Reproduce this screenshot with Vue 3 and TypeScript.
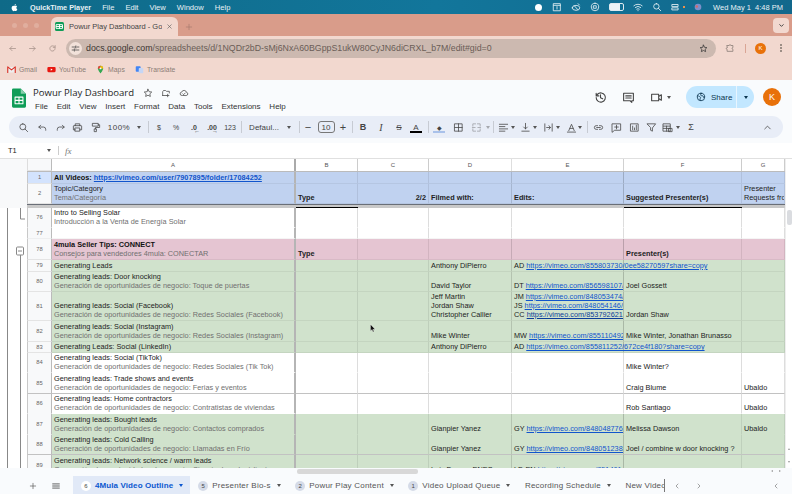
<script setup lang="ts">
interface Tool { x: number; kind: 'icon' | 'text' | 'sep' | 'caret' | 'box'; v?: string; cls?: string }
interface Edit { who: string; url: string; dark?: boolean }
interface Row {
  n: string; h: number; tone: string; en?: string; es?: string; bold?: boolean
  b?: string; c?: string; d?: string[]; e?: Edit[]; f?: string; g?: string[]; link?: string
  headTail?: boolean; sel?: boolean; strong?: boolean; open?: boolean
}

const icons: Record<string, string> = {
  search: 'M10.5 4a6.5 6.5 0 1 0 0 13 6.5 6.5 0 0 0 0-13zM15.5 15.5 21 21',
  undo: 'M8 7 4 11l4 4M4 11h10a5 5 0 0 1 5 5v2',
  redo: 'M16 7l4 4-4 4M20 11H10a5 5 0 0 0-5 5v2',
  print: 'M7 8V4h10v4M7 17H3V9a1 1 0 0 1 1-1h16a1 1 0 0 1 1 1v8h-4M7 13h10v7H7z',
  paint: 'M6 3h12v6H6zM18 6h3v6h-9v3M10 15h4v6h-4z',
  border: 'M4 4h16v16H4zM12 4v16M4 12h16',
  merge: 'M4 9V4h6M14 4h6v5M4 15v5h6M14 20h6v-5M3 12h6M15 12h6',
  align: 'M3 5h18M3 10h12M3 15h18M3 20h12',
  valign: 'M12 3v12M8 11l4 4 4-4M4 20h16',
  wrap: 'M4 4v16M20 4v16M8 12h8M13 8l3 4-3 4',
  rotate: 'M6 19 12 5l6 14M8.5 14h7M3 22h18',
  link: 'M10 8H7a4 4 0 0 0 0 8h3M14 8h3a4 4 0 0 1 0 8h-3M8 12h8',
  note: 'M3 4h18v14H8l-5 4zM12 7v8M8 11h8',
  chart: 'M4 4h16v16H4zM8 9v8M12 13v4M16 7v10',
  filter: 'M3 4h18l-7 9v7l-4-2v-5z',
  view: 'M3 4h15v16H3zM3 9h15M3 14h15M10 9v11M15 14h7v7h-7z',
  up: 'M6 15l6-6 6 6',
  star: 'M12 3l2.8 5.9 6.2.8-4.6 4.3 1.2 6.3L12 17.3l-5.6 3 1.2-6.3L3 9.7l6.2-.8z',
  moved: 'M4 18V9l2-3h5l2 2h7v4M4 18h8M16 15v6M13 18h6',
  cloud: 'M7 18a4 4 0 0 1-.6-8A6 6 0 0 1 18 10.500a3.800 3.800 0 0 1 0 7.500zM9 14l2 2 4-4',
  history: 'M4 12a8.500 8.500 0 1 0 2.500-6L4 8.500M4 4v5h5M12 7v5.500l4 2',
  comment: 'M3 4h18v14h-3v3l-3-3H3zM7 9h10M7 13h10',
  video: 'M3 6h13v12H3zM16 10l5-3v10l-5-3',
  globe: 'M12 3a9 9 0 1 0 0 18 9 9 0 0 0 0-18zM4 9c3 0 4 2 6 3s1 3 0 4 0 4 0 4M14 3c-1 2-3 2-3 4s3 2 5 2 1 3 2 4l2-1',
  puzzle: 'M5 6h5a2 2 0 1 1 4 0h5v5a2 2 0 1 0 0 4v5H5v-5a2 2 0 1 1 0-4z',
  reload: 'M19 12a7 7 0 1 1-2-5l2 2M19 4v5h-5',
  back: 'M20 12H5M11 6l-6 6 6 6',
  forward: 'M4 12h15M13 6l6 6-6 6',
  tune: 'M3 8h10M17 8h4M13 5v6M3 16h4M11 16h10M9 13v6',
  menu: 'M4 7h16M4 12h16M4 17h16',
  left: 'M15 6l-6 6 6 6',
  right: 'M9 6l6 6-6 6',
  down: 'M6 9l6 6 6-6',
  close: 'M6 6l12 12M18 6 6 18',
  plus: 'M12 4v16M4 12h16',
}

const rawTools: Tool[] = [
  { x: 23, kind: 'icon', v: 'search' }, { x: 42, kind: 'icon', v: 'undo' }, { x: 60, kind: 'icon', v: 'redo' },
  { x: 77, kind: 'icon', v: 'print' }, { x: 95, kind: 'icon', v: 'paint' }, { x: 119, kind: 'text', v: '100%', cls: 'wide' },
  { x: 139, kind: 'caret' }, { x: 148, kind: 'sep' }, { x: 159, kind: 'text', v: '$', cls: 'small' },
  { x: 176, kind: 'text', v: '%', cls: 'small' }, { x: 194, kind: 'text', v: '.0', cls: 'dec less' },
  { x: 212, kind: 'text', v: '.00', cls: 'dec more' }, { x: 230, kind: 'text', v: '123', cls: 'small' },
  { x: 241, kind: 'sep' }, { x: 264, kind: 'text', v: 'Defaul...' }, { x: 289, kind: 'caret' }, { x: 299, kind: 'sep' },
  { x: 308, kind: 'text', v: '−', cls: 'big' }, { x: 326, kind: 'box', v: '10' }, { x: 343, kind: 'text', v: '+', cls: 'big' },
  { x: 352, kind: 'sep' }, { x: 363, kind: 'text', v: 'B', cls: 'bold' }, { x: 381, kind: 'text', v: 'I', cls: 'ital' },
  { x: 399, kind: 'text', v: 'S', cls: 'strike' }, { x: 416, kind: 'text', v: 'A', cls: 'color' }, { x: 428, kind: 'sep' },
  { x: 439, kind: 'text', v: '◆', cls: 'fill' }, { x: 458, kind: 'icon', v: 'border' }, { x: 476, kind: 'icon', v: 'merge', cls: 'dim' },
  { x: 488, kind: 'caret', cls: 'dim' }, { x: 493, kind: 'sep' }, { x: 503, kind: 'icon', v: 'align' }, { x: 513, kind: 'caret' },
  { x: 525, kind: 'icon', v: 'valign' }, { x: 535, kind: 'caret' }, { x: 548, kind: 'icon', v: 'wrap' }, { x: 558, kind: 'caret' },
  { x: 571, kind: 'icon', v: 'rotate' }, { x: 580, kind: 'caret' }, { x: 587, kind: 'sep' }, { x: 598, kind: 'icon', v: 'link' },
  { x: 616, kind: 'icon', v: 'note' }, { x: 634, kind: 'icon', v: 'chart' }, { x: 651, kind: 'icon', v: 'filter' },
  { x: 667, kind: 'icon', v: 'view' }, { x: 678, kind: 'caret' }, { x: 691, kind: 'text', v: 'Σ', cls: 'sigma' },
  { x: 767, kind: 'icon', v: 'up' },
]
let edge = 9
const tools = rawTools.map((t, i) => {
  const next = i === rawTools.length - 1 ? 783 : rawTools[i + 1].x
  const half = Math.min(t.x - edge, (next - t.x) / 2)
  const gap = t.x - half - edge
  edge = t.x + half
  return { ...t, w: half * 2, gap }
})

const appMenu = ['File', 'Edit', 'View', 'Window', 'Help']
const docMenu = ['File', 'Edit', 'View', 'Insert', 'Format', 'Data', 'Tools', 'Extensions', 'Help']
const columns = ['A', 'B', 'C', 'D', 'E', 'F', 'G']

const frozen: Row[] = [
  { n: '1', h: 12, tone: 'blue', en: 'All Videos: ', link: 'https://vimeo.com/user/7907895/folder/17084252', sel: true, bold: true },
  { n: '2', h: 20, tone: 'blue', en: 'Topic/Category', es: 'Tema/Categoría', b: 'Type', c: '2/2', d: ['Filmed with:'], e: [{ who: 'Edits:', url: '' }], f: 'Suggested Presenter(s)', g: ['Presenter', 'Requests fro'] },
]
const gl = 'Generating leads: '
const ge = 'Generación de oportunidades de negocio: '
const rows: Row[] = [
  { n: '76', h: 20, tone: 'white', en: 'Intro to Selling Solar', es: 'Introducción a la Venta de Energía Solar', open: true },
  { n: '77', h: 11, tone: 'white' },
  { n: '78', h: 21, tone: 'pink', en: '4mula Seller Tips: CONNECT', es: 'Consejos para vendedores 4mula: CONECTAR', b: 'Type', f: 'Presenter(s)', bold: true, headTail: true },
  { n: '79', h: 12, tone: 'green', en: 'Generating Leads', d: ['Anthony DiPierro'], e: [{ who: 'AD', url: 'https://vimeo.com/855803730/0ee58270597share=copy' }] },
  { n: '80', h: 20, tone: 'green', en: gl + 'Door knocking', es: ge + 'Toque de puertas', d: ['David Taylor'], e: [{ who: 'DT', url: 'https://vimeo.com/856598107/' }], f: 'Joel Gossett' },
  { n: '81', h: 29, tone: 'green', en: gl + 'Social (Facebook)', es: ge + 'Redes Sociales (Facebook)', d: ['Jeff Martin', 'Jordan Shaw', 'Christopher Callier'], e: [{ who: 'JM', url: 'https://vimeo.com/848053474/' }, { who: 'JS', url: 'https://vimeo.com/848054146/' }, { who: 'CC', url: 'https://vimeo.com/853792621/', dark: true }], f: 'Jordan Shaw' },
  { n: '82', h: 21, tone: 'green', en: gl + 'Social (Instagram)', es: ge + 'Redes Sociales (Instagram)', d: ['Mike Winter'], e: [{ who: 'MW', url: 'https://vimeo.com/855110492' }], f: 'Mike Winter, Jonathan Brunasso' },
  { n: '83', h: 11, tone: 'green', en: 'Generating Leads: Social (LinkedIn)', d: ['Anthony DiPierro'], e: [{ who: 'AD', url: 'https://vimeo.com/855811252/672ce4f180?share=copy' }] },
  { n: '84', h: 20, tone: 'white', en: gl + 'Social (TikTok)', es: ge + 'Redes Sociales (Tik Tok)', f: 'Mike Winter?', open: true },
  { n: '85', h: 21, tone: 'white', en: gl + 'Trade shows and events', es: ge + 'Ferias y eventos', f: 'Craig Blume', g: ['Ubaldo'], strong: true },
  { n: '86', h: 20, tone: 'white', en: gl + 'Home contractors', es: ge + 'Contratistas de viviendas', f: 'Rob Santiago', g: ['Ubaldo'], open: true },
  { n: '87', h: 21, tone: 'green', en: gl + 'Bought leads', es: ge + 'Contactos comprados', d: ['Gianpier Yanez'], e: [{ who: 'GY', url: 'https://vimeo.com/848048776/' }], f: 'Melissa Dawson', g: ['Ubaldo'], open: true },
  { n: '88', h: 20, tone: 'green', en: gl + 'Cold Calling', es: ge + 'Llamadas en Frío', d: ['Gianpier Yanez'], e: [{ who: 'GY', url: 'https://vimeo.com/848051238/' }], f: 'Joel / combine w door knocking ?', strong: true },
  { n: '89', h: 21, tone: 'green', en: gl + 'Network science / warm leads', es: ge + 'Ciencia de redes/clientes', d: ['Luis Dome - ENES'], e: [{ who: 'LD EN', url: 'https://vimeo.com/851401' }] },
]

const tabs = [
  { n: '6', name: '4Mula Video Outline', active: true },
  { n: '5', name: 'Presenter Bio-s' },
  { n: '2', name: 'Powur Play Content' },
  { n: '1', name: 'Video Upload Queue' },
  { n: '', name: 'Recording Schedule' },
]
</script>

<template>
  <div class="page">
    <header class="mac">
      <svg class="apple" viewBox="0 0 24 24"><path d="M17 12.600c0-2.300 1.900-3.400 2-3.500-1.100-1.600-2.800-1.800-3.400-1.800-1.400-.2-2.800.9-3.500.9s-1.900-.8-3.100-.8c-1.600 0-3.100.9-3.900 2.400-1.700 2.900-.4 7.200 1.200 9.500.8 1.100 1.700 2.400 3 2.400 1.200-.1 1.700-.8 3.100-.8s1.900.8 3.100.7c1.300 0 2.100-1.100 2.900-2.300.9-1.300 1.300-2.600 1.300-2.700-.1 0-2.700-1-2.700-4zM14.700 5.700c.6-.8 1.100-1.900 1-3-1 0-2.100.6-2.800 1.400-.6.700-1.100 1.800-1 2.900 1.100.1 2.200-.5 2.800-1.300z" /></svg>
      <b class="mac-app">QuickTime Player</b>
      <span v-for="m in appMenu" :key="m" class="mac-item">{{ m }}</span>
      <div class="mac-right">
        <span class="rec"></span>
        <svg class="st" viewBox="0 0 24 24"><path d="M4 4h16v17H4zM4 8h16M12 11v6" /></svg>
        <svg class="st" viewBox="0 0 24 24"><path d="M3 14a9 6 0 0 1 18 0 9 6 0 0 1-18 0zM8 9l8 9M17 4l3 3" /></svg>
        <svg class="st" viewBox="0 0 24 24"><path d="M12 3a9 9 0 1 0 0 18 9 9 0 0 0 0-18zM9 9h6v6H9z" /></svg>
        <span class="battery"><i></i></span>
        <svg class="st wifi" viewBox="0 0 24 24"><path d="M2 9a15 15 0 0 1 20 0M5.500 13a10 10 0 0 1 13 0M9 17a5 5 0 0 1 6 0M12 20.500v.5" /></svg>
        <svg class="st" viewBox="0 0 24 24"><path :d="icons.search" /></svg>
        <svg class="st" viewBox="0 0 24 24"><path d="M3 6h14v5H3zM3 14h14v5H3z" /></svg>
        <span class="orange-dot"></span>
        <svg class="st siri" viewBox="0 0 24 24"><circle cx="12" cy="12" r="8" fill="#7c8fc9" stroke="none" /><circle cx="9" cy="11" r="3" fill="#d46a6a" stroke="none" /></svg>
        <span class="clock">Wed May 1&nbsp;&nbsp;4:48 PM</span>
      </div>
    </header>

    <section class="tabstrip">
      <div class="lights"><i></i><i></i><i></i></div>
      <div class="ctab">
        <span class="fav"><svg viewBox="0 0 24 24"><path d="M4 7h16v10H4zM4 12h16M12 7v10" /></svg></span>
        <span class="ctab-title">Powur Play Dashboard - Goog</span>
        <svg class="x" viewBox="0 0 24 24"><path :d="icons.close" /></svg>
      </div>
      <svg class="newtab" viewBox="0 0 24 24"><path :d="icons.plus" /></svg>
      <span class="tabchev"><svg viewBox="0 0 24 24"><path :d="icons.down" /></svg></span>
    </section>

    <section class="addr">
      <svg class="nav" viewBox="0 0 24 24"><path :d="icons.back" /></svg>
      <svg class="nav" viewBox="0 0 24 24"><path :d="icons.forward" /></svg>
      <svg class="nav" viewBox="0 0 24 24"><path :d="icons.reload" /></svg>
      <div class="omni">
        <span class="tune"><svg viewBox="0 0 24 24"><path :d="icons.tune" /></svg></span>
        <span class="url"><span class="host">docs.google.com</span>/spreadsheets/d/1NQDr2bD-sMj6NxA60BGppS1ukW80CyJN6diCRXL_b7M/edit#gid=0</span>
        <svg class="ostar" viewBox="0 0 24 24"><path :d="icons.star" /></svg>
      </div>
      <svg class="ext" viewBox="0 0 24 24"><path :d="icons.puzzle" /></svg>
      <span class="vsep"></span>
      <span class="mini-k">K</span>
      <span class="dots"><i></i><i></i><i></i></span>
    </section>

    <section class="bookmarks">
      <span class="bm"><svg viewBox="0 0 24 24"><path d="M2 5h20v15H2z" fill="#eee" /><path d="M2 20V5l10 8 10-8v15" fill="none" stroke="#d93025" stroke-width="3" /></svg>Gmail</span>
      <span class="bm yt"><svg viewBox="0 0 24 24"><rect x="1" y="5" width="22" height="14" rx="3" fill="#e8170f" /><path d="M10 9l5 3-5 3z" fill="#fff" /></svg>YouTube</span>
      <span class="bm mp"><svg viewBox="0 0 24 24"><path d="M12 2a7 7 0 0 0-7 7c0 5 7 13 7 13s7-8 7-13a7 7 0 0 0-7-7z" fill="#34a853" /><path d="M12 2a7 7 0 0 0-7 7l7 1z" fill="#ea4335" /><path d="M12 2a7 7 0 0 1 7 7l-7 1z" fill="#fbbc04" /><circle cx="12" cy="9" r="2.500" fill="#fff" /></svg>Maps</span>
      <span class="bm tr"><svg viewBox="0 0 24 24"><rect x="2" y="3" width="13" height="15" rx="2" fill="#4285f4" /><rect x="10" y="8" width="12" height="14" rx="2" fill="#c5d6f5" /></svg>Translate</span>
    </section>

    <section class="dochead">
      <svg class="logo" viewBox="0 0 16 22"><path d="M1.500 0H10l6 6v14.500a1.500 1.500 0 0 1-1.500 1.500h-13A1.500 1.500 0 0 1 0 20.500v-19A1.500 1.500 0 0 1 1.500 0z" fill="#0f9d58" /><path d="M10 0v6h6z" fill="#87ceac" /><path d="M3.500 10h9v7.500h-9zM3.500 13.700h9M8 10v7.500" fill="none" stroke="#fff" stroke-width="1.200" /></svg>
      <div class="docmeta">
        <div class="titlerow">
          <span class="doctitle">Powur Play Dashboard</span>
          <svg class="hicon" viewBox="0 0 24 24"><path :d="icons.star" /></svg>
          <svg class="hicon" viewBox="0 0 24 24"><path :d="icons.moved" /></svg>
          <svg class="hicon" viewBox="0 0 24 24"><path :d="icons.cloud" /></svg>
        </div>
        <nav class="docmenu"><span v-for="m in docMenu" :key="m">{{ m }}</span></nav>
      </div>
      <div class="headright">
        <svg class="big-ico" viewBox="0 0 24 24"><path :d="icons.history" /></svg>
        <svg class="big-ico" viewBox="0 0 24 24"><path :d="icons.comment" /></svg>
        <svg class="big-ico vid" viewBox="0 0 24 24"><path :d="icons.video" /></svg>
        <span class="tcaret vcaret"></span>
        <div class="share">
          <span class="share-main"><svg viewBox="0 0 24 24"><path :d="icons.globe" /></svg>Share</span>
          <span class="share-more"><span class="tcaret"></span></span>
        </div>
        <span class="avatar">K</span>
      </div>
    </section>

    <section class="toolbar-wrap">
      <div class="toolbar">
        <span v-for="(t, i) in tools" :key="i" class="tool" :class="[t.kind, t.cls]" :style="{ width: t.w + 'px', marginLeft: t.gap + 'px' }">
          <svg v-if="t.kind === 'icon'" viewBox="0 0 24 24"><path :d="icons[t.v as string]" /></svg>
          <i v-else-if="t.kind === 'sep'" class="tsep"></i>
          <i v-else-if="t.kind === 'caret'" class="tcaret"></i>
          <b v-else-if="t.kind === 'box'" class="sizebox">{{ t.v }}</b>
          <template v-else>{{ t.v }}</template>
        </span>
      </div>
    </section>

    <section class="formula">
      <span class="nameref">T1</span>
      <i class="tcaret"></i>
      <i class="fsep"></i>
      <i class="fx">fx</i>
    </section>

    <section class="grid-area">
      <div class="gutter">
        <div class="gut-top"></div>
        <svg class="gut-svg" viewBox="0 0 27 262">
          <path d="M7.500 0V262M20.500 0V11H25M20.500 47V262" />
          <rect x="16.500" y="39" width="7" height="8" rx="1" fill="#fff" />
          <path d="M18 43h4" />
        </svg>
      </div>
      <div class="sheet">
        <div class="row colhead">
          <span class="cell num corner"></span>
          <span v-for="c in columns" :key="c" class="cell letter" :class="'c' + c">{{ c }}</span>
        </div>
        <div v-for="r in frozen" :key="r.n" class="row" :class="r.tone" :style="{ height: r.h + 'px' }">
          <span class="cell num" :class="{ sel: r.sel }">{{ r.n }}</span>
          <span class="cell cA">
            <span class="lines">
              <span v-if="r.link" class="en strong">{{ r.en }}<u class="lnk">{{ r.link }}</u></span>
              <template v-else>
                <span class="en mid">{{ r.en }}</span>
                <span class="es">{{ r.es }}</span>
              </template>
            </span>
          </span>
          <span class="cell cB"><b>{{ r.b }}</b></span>
          <span class="cell cC end"><b>{{ r.c }}</b></span>
          <span class="cell cD"><b v-for="d in r.d" :key="d">{{ d }}</b></span>
          <span class="cell cE"><b v-for="e in r.e" :key="e.who">{{ e.who }}</b></span>
          <span class="cell cF"><b>{{ r.f }}</b></span>
          <span class="cell cG clip"><span v-for="g in r.g" :key="g" class="gl">{{ g }}</span></span>
        </div>
        <div class="freeze"><i class="fb"></i><i class="ff"></i></div>
        <div class="scrolled">
          <div v-for="r in rows" :key="r.n" class="row" :class="[r.tone, { strongb: r.strong, openb: r.open }]" :style="{ height: r.h + 'px' }">
            <span class="cell num">{{ r.n }}</span>
            <span class="cell cA">
              <span class="lines">
                <span class="en" :class="{ strong: r.bold }">{{ r.en }}</span>
                <span v-if="r.es" class="es">{{ r.es }}</span>
              </span>
            </span>
            <span class="cell cB"><b>{{ r.b }}</b></span>
            <span class="cell cC"></span>
            <span class="cell cD"><span v-for="d in r.d" :key="d" class="gl">{{ d }}</span></span>
            <span class="cell cE" :class="{ clip: r.f || r.n === '81' || r.n === '89' }">
              <span v-for="e in r.e" :key="e.who" class="gl">{{ e.who }} <u class="lnk" :class="{ dark: e.dark }">{{ e.url }}</u></span>
            </span>
            <span class="cell cF"><b v-if="r.headTail">{{ r.f }}</b><span v-else>{{ r.f }}</span></span>
            <span class="cell cG"><span v-for="g in r.g" :key="g" class="gl">{{ g }}</span></span>
          </div>
          <svg class="cursor" viewBox="0 0 12 16"><path d="M1 0v13l3-3 2 5 2-1-2-4.500h4z" fill="#111" stroke="#fff" stroke-width=".6" /></svg>
        </div>
      </div>
      <div class="vscroll"><i class="vthumb"></i><i class="vup"></i><i class="vdn"></i></div>
    </section>

    <footer class="bottom">
      <div class="hscroll"><i class="hthumb"></i><i class="harr"></i><i class="harr r"></i></div>
      <div class="tabbar">
        <svg class="fplus" viewBox="0 0 24 24"><path :d="icons.plus" /></svg>
        <svg class="fmenu" viewBox="0 0 24 24"><path :d="icons.menu" /></svg>
        <div class="stabs">
          <div v-for="t in tabs" :key="t.name" class="stab" :class="{ on: t.active }">
            <span v-if="t.n" class="badge">{{ t.n }}</span>
            <span class="sname">{{ t.name }}</span>
            <i class="tcaret"></i>
          </div>
          <div class="stab last"><span class="sname">New Video</span></div>
        </div>
        <svg class="arrow a1" viewBox="0 0 24 24"><path :d="icons.left" /></svg>
        <svg class="arrow a2" viewBox="0 0 24 24"><path :d="icons.right" /></svg>
        <svg class="arrow a3" viewBox="0 0 24 24"><path :d="icons.left" /></svg>
      </div>
    </footer>
  </div>
</template>

<style>
html, body { margin: 0; overflow: hidden; }
</style>

<style scoped>
.page { width: 792px; height: 494px; overflow: hidden; display: flex; flex-direction: column; font-family: "Liberation Sans", Arial, sans-serif; color: #222; background: #fff; }
svg { fill: none; stroke: currentColor; stroke-width: 2; stroke-linecap: round; stroke-linejoin: round; flex: none; }
i { font-style: normal; }

.mac { height: 14px; flex: none; display: flex; align-items: center; background: linear-gradient(90deg, #0f6a88, #12769b 55%, #12688c); color: #e8f1f5; font-size: 7.600px; padding-left: 10px; box-sizing: border-box; }
.apple { width: 9px; height: 9px; fill: #fff; stroke: none; margin-right: 11px; }
.mac-app { margin-right: 11px; font-weight: 700; font-size: 7.300px; white-space: nowrap; }
.mac-item { margin-right: 11px; }
.mac-right { margin-left: auto; display: flex; align-items: center; gap: 9px; padding-right: 9px; font-size: 7.500px; }
.rec { width: 7px; height: 7px; border-radius: 50%; background: #fff; margin-right: 1px; }
.st { width: 10px; height: 10px; stroke: #eaf3f7; }
.battery { width: 13px; height: 6px; border: 1px solid #dfeaf0; border-radius: 2px; }
.battery i { display: block; width: 10px; height: 6px; background: #eaf3f7; }
.orange-dot { width: 2px; height: 2px; background: #e8914a; margin-left: -7px; }
.siri { margin-left: -1px; }
.clock { white-space: nowrap; margin-left: 1px; }

.tabstrip { height: 22px; flex: none; background: #d99c8a; display: flex; align-items: flex-end; position: relative; }
.lights { display: flex; gap: 6px; padding: 0 0 8px 12px; width: 51px; box-sizing: border-box; flex: none; }
.lights i { width: 5px; height: 5px; border-radius: 50%; background: #e0ae9e; flex: none; }
.ctab { width: 127px; height: 19px; background: #f2d8cf; border-radius: 6px 6px 0 0; display: flex; align-items: center; padding: 0 5px 0 4px; box-sizing: border-box; font-size: 7.500px; color: #444; flex: none; }
.fav { width: 9px; height: 9px; background: #0f9d58; border-radius: 1.500px; display: flex; flex: none; margin-right: 5px; }
.fav svg { width: 9px; height: 9px; stroke: #fff; stroke-width: 2.500; }
.ctab-title { flex: 1; overflow: hidden; white-space: nowrap; }
.x { width: 7px; height: 7px; margin-left: 4px; stroke: #555; }
.newtab { width: 8px; height: 8px; margin: 0 0 5px 7px; stroke: #a67a6c; }
.tabchev { position: absolute; right: 3px; top: 4px; width: 16px; height: 15px; background: #f2d8cf; border-radius: 4px; display: flex; align-items: center; justify-content: center; }
.tabchev svg { width: 7px; height: 7px; stroke: #333; stroke-width: 3; }

.addr { height: 24px; flex: none; background: #f2d8cf; display: flex; align-items: center; padding-left: 8px; box-sizing: border-box; }
.nav { width: 9px; height: 9px; stroke: #a49088; margin-right: 11px; }
.nav:nth-child(3) { margin-right: 9px; }
.omni { width: 650px; height: 19px; flex: none; background: #ccb9b0; border-radius: 10px; display: flex; align-items: center; padding-left: 3px; box-sizing: border-box; font-size: 8.800px; color: #6a5d57; }
.tune { width: 13px; height: 13px; border-radius: 50%; background: #f2e2da; display: flex; align-items: center; justify-content: center; margin-right: 4px; }
.tune svg { width: 9px; height: 9px; stroke: #444; }
.host { color: #3b3531; }
.url { white-space: nowrap; flex: 1; }
.ostar { width: 9px; height: 9px; margin-right: 8px; stroke: #333; }
.ext { width: 10px; height: 10px; margin-left: 9px; stroke: #8d8079; }
.vsep { width: 1px; height: 9px; background: #d9a595; margin-left: 10px; }
.mini-k { width: 11px; height: 11px; border-radius: 50%; background: #e8710a; color: #fff; font-size: 6px; display: flex; align-items: center; justify-content: center; margin-left: 9px; }
.dots { display: flex; flex-direction: column; gap: 1.500px; margin-left: 14px; }
.dots i { width: 1.500px; height: 1.500px; background: #8d8079; border-radius: 50%; }

.bookmarks { height: 20px; flex: none; background: #f2d8cf; display: flex; align-items: center; padding: 0 0 1px 7px; box-sizing: border-box; font-size: 6.800px; letter-spacing: .05px; color: #8b7d76; }
.bm { display: flex; align-items: center; gap: 3px; margin-right: 10px; }
.bm svg { width: 9px; height: 9px; stroke: none; }

.dochead { height: 36px; flex: none; background: #f9fbfd; display: flex; align-items: flex-start; position: relative; padding-left: 12px; box-sizing: border-box; }
.logo { width: 14px; height: 20px; margin-top: 8px; stroke: none; }
.docmeta { margin-left: 7px; padding-top: 6px; }
.titlerow { display: flex; align-items: center; height: 13px; }
.doctitle { font-size: 9.550px; color: #1f1f1f; width: 110px; white-space: nowrap; font-family: "Open Sans", "Liberation Sans", sans-serif; }
.hicon { width: 10px; height: 10px; margin-right: 8px; stroke: #444; stroke-width: 1.800; }
.docmenu { display: flex; gap: 8.800px; font-size: 8px; color: #333; margin: 3px 0 0 2px; }
.headright { position: absolute; top: 6px; left: 594px; display: flex; align-items: center; height: 22px; }
.big-ico { width: 13px; height: 13px; stroke: #444; margin-right: 15px; }
.vid { margin-right: 4px; }
.vcaret { margin-right: 15px; }
.share { width: 68px; height: 22px; background: #c2e7ff; border-radius: 11px; display: flex; align-items: center; font-size: 8px; color: #0b3550; }
.share-main { flex: 1; display: flex; align-items: center; gap: 5px; padding-left: 10px; height: 100%; border-right: 1px solid #e8f5ff; font-weight: 500; }
.share-main svg { width: 10px; height: 10px; stroke: #0b3550; }
.share-more { width: 17px; display: flex; justify-content: center; }
.share-more .tcaret { border-top-color: #0b3550; }
.avatar { width: 18px; height: 18px; border-radius: 50%; background: #e8710a; color: #fff; font-size: 9px; display: flex; align-items: center; justify-content: center; margin-left: 9px; }

.toolbar-wrap { height: 27px; flex: none; background: #f9fbfd; padding-left: 9px; box-sizing: border-box; }
.toolbar { width: 774px; height: 22px; background: #e8edf7; border-radius: 11px; display: flex; align-items: center; color: #444; font-size: 8px; }
.tool { display: flex; align-items: center; justify-content: center; flex: none; white-space: nowrap; overflow: visible; height: 100%; position: relative; }
.tool svg { width: 11px; height: 11px; stroke-width: 1.700; }
.tsep { width: 1px; height: 12px; background: #c7cbd3; display: block; }
.tcaret { display: block; width: 0; height: 0; border-left: 2.500px solid transparent; border-right: 2.500px solid transparent; border-top: 3px solid #555; flex: none; }
.tool.dim { opacity: .45; }
.small { font-size: 7px; }
.wide { letter-spacing: .5px; }
.dec { font-size: 7px; font-weight: 700; }
.dec::after { position: absolute; top: 12px; font-size: 6px; line-height: 6px; font-weight: 400; }
.less::after { content: "←"; left: 50%; }
.more::after { content: "→"; left: 50%; }
.big { font-size: 11px; }
.bold { font-weight: 700; font-size: 9px; }
.ital { font-style: italic; font-size: 10px; font-family: "Liberation Serif", serif; }
.strike { text-decoration: line-through; font-size: 8px; }
.color { font-size: 8px; }
.color::after { content: ""; position: absolute; left: 50%; margin-left: -6px; top: 15px; width: 12px; height: 2px; background: #000; }
.fill { font-size: 6px; }
.fill::after { content: ""; position: absolute; left: 50%; margin-left: -6px; top: 15px; width: 12px; height: 2px; background: #a9c1ea; }
.sigma { font-size: 9px; }
.sizebox { width: 18px; height: 12px; border: 1px solid #777; border-radius: 3px; display: flex; align-items: center; justify-content: center; font-weight: 400; box-sizing: border-box; }

.formula { height: 16px; flex: none; background: #fff; display: flex; align-items: center; font-size: 7.500px; box-sizing: border-box; border-bottom: 1px solid #e0e0e0; }
.nameref { margin-left: 8px; width: 39px; }
.fsep { width: 1px; height: 9px; background: #ccc; margin-left: 7px; }
.fx { font-family: "Liberation Serif", serif; font-style: italic; color: #777; margin-left: 6px; font-size: 9px; }

.grid-area { height: 309px; flex: none; display: flex; position: relative; overflow: hidden; }
.gutter { width: 27px; flex: none; background: #f9f9f9; display: flex; flex-direction: column; }
.gut-top { height: 49px; flex: none; background: #f8f9fa; }
.gut-svg { width: 27px; height: 262px; stroke: #888; stroke-width: 1; stroke-linecap: butt; background: #fff; }
.sheet { width: 758px; flex: none; display: flex; flex-direction: column; position: relative; overflow: hidden; font-size: 7.300px; letter-spacing: .02px; color: #222; }
.row { display: grid; grid-template-columns: 25px 244px 62px 71px 83px 112px 118px 43px; flex: none; }
.colhead { height: 13px; background: #fff; border-bottom: 1px solid #bbb; box-sizing: border-box; }
.cell { border-right: 1px solid rgba(0, 0, 0, .08); border-bottom: 1px solid rgba(0, 0, 0, .055); box-sizing: border-box; padding: 0 2px 1px; display: flex; flex-direction: column; justify-content: flex-end; white-space: nowrap; line-height: 9px; min-width: 0; }
.letter { align-items: center; justify-content: center; font-size: 6px; color: #555; border-bottom: 0; border-right-color: #ccc; padding: 0; }
.num { background: #f8f9fa; text-align: center; align-items: center; justify-content: center; font-size: 5.800px; color: #666; padding: 0; border-left: 1px solid #c8c8c8; border-right-color: #bbb; border-bottom-color: #e4e4e4; }
.corner { border-left: 1px solid #ddd; }
.sel { background: #d3e3fd; }
.cA { border-right: 2px solid #b5b5b5; }
.colhead .cA { border-right: 2px solid #aaa; }
.cE { border-right-color: rgba(0, 0, 0, .18); }
.cD { border-right-color: rgba(0, 0, 0, .13); }
.clip { overflow: hidden; }
.end { align-items: flex-end; }
.lines { display: flex; flex-direction: column; }
.en { color: #222; line-height: 9.200px; }
.es { color: #707070; line-height: 9.200px; }
.strong { font-weight: 700; color: #111; }
.mid { font-weight: 400; color: #222; }
.gl { display: block; }
.cell b { font-weight: 700; color: #222; }
.lnk { color: #1155cc; text-decoration: underline; }
.lnk.dark { color: #0b3d99; }
.blue { background: #c0d2f0; }
.pink { background: #e5c5d2; }
.green { background: #d0e2cc; }
.white { background: #fff; }
.white .cell { border-bottom-color: rgba(0, 0, 0, .04); border-right-color: #ddd; }
.white .cA { border-right-color: #b5b5b5; }
.white .num { border-right-color: #bbb; }
.strongb .cell { border-bottom: 1px solid #c2c2c2; }
.openb .cell { border-bottom-color: transparent; }
.freeze { height: 4px; flex: none; background: #c9c9c9; position: relative; border-top: 1px solid #6a6f78; box-sizing: border-box; }
.fb, .ff { position: absolute; top: 2px; height: 1px; background: #000; }
.fb { left: 269px; width: 62px; }
.ff { left: 597px; width: 118px; }
.scrolled { flex: 1; overflow: hidden; position: relative; min-height: 0; }
.cursor { position: absolute; left: 343px; top: 116px; width: 6px; height: 9px; stroke: none; }
.vscroll { width: 7px; flex: none; background: #fff; border-left: 1px solid #eee; box-sizing: border-box; position: relative; }
.vthumb { display: block; width: 5px; height: 15px; margin: 51px 0 0 1px; background: #dadce0; border-radius: 2px; }
.vup, .vdn { position: absolute; left: 2px; width: 0; height: 0; border-left: 1.500px solid transparent; border-right: 1.500px solid transparent; }
.vup { top: 289px; border-bottom: 2px solid #999; }
.vdn { top: 302px; border-top: 2px solid #999; }

.bottom { height: 27px; flex: none; background: #f9fbfd; display: flex; flex-direction: column; }
.hscroll { height: 8px; flex: none; position: relative; }
.hthumb { position: absolute; left: 297px; top: 1px; width: 121px; height: 5px; background: #d8d8d8; border-radius: 2px; }
.harr { position: absolute; left: 771px; top: 2px; width: 0; height: 0; border-top: 1.500px solid transparent; border-bottom: 1.500px solid transparent; border-right: 2px solid #999; }
.harr.r { left: 779px; border-right: 0; border-left: 2px solid #999; }
.tabbar { height: 19px; flex: none; display: flex; align-items: center; position: relative; padding-left: 29px; box-sizing: border-box; color: #555; font-size: 8px; }
.fplus { width: 8px; height: 8px; stroke: #555; }
.fmenu { width: 10px; height: 10px; margin-left: 14px; stroke: #444; }
.stabs { display: flex; width: 592px; margin-left: 12px; overflow: hidden; height: 19px; flex: none; position: relative; }
.stabs::after { content: ""; position: absolute; right: 0; top: 3px; width: 1px; height: 13px; background: #777; }
.stab { display: flex; align-items: center; flex: none; height: 100%; letter-spacing: .22px; padding: 0; margin-right: 14.500px; }
.on { background: #e1e9f7; color: #0b57d0; font-weight: 700; letter-spacing: .1px; padding: 0 7px 0 8px; margin-right: 8px; }
.on .tcaret { border-top-color: #0b57d0; }
.stab .tcaret { margin-left: 6px; }
.badge { width: 10px; height: 10px; border-radius: 50%; background: #d5dbe8; color: #444; font-size: 6px; font-weight: 400; display: flex; align-items: center; justify-content: center; margin-right: 4px; }
.on .badge { background: #fff; }
.last { margin-right: 0; }
.arrow { position: absolute; top: 6px; width: 8px; height: 8px; stroke: #777; }
.a1 { left: 673px; }
.a2 { left: 695px; }
.a3 { left: 772px; }
</style>
